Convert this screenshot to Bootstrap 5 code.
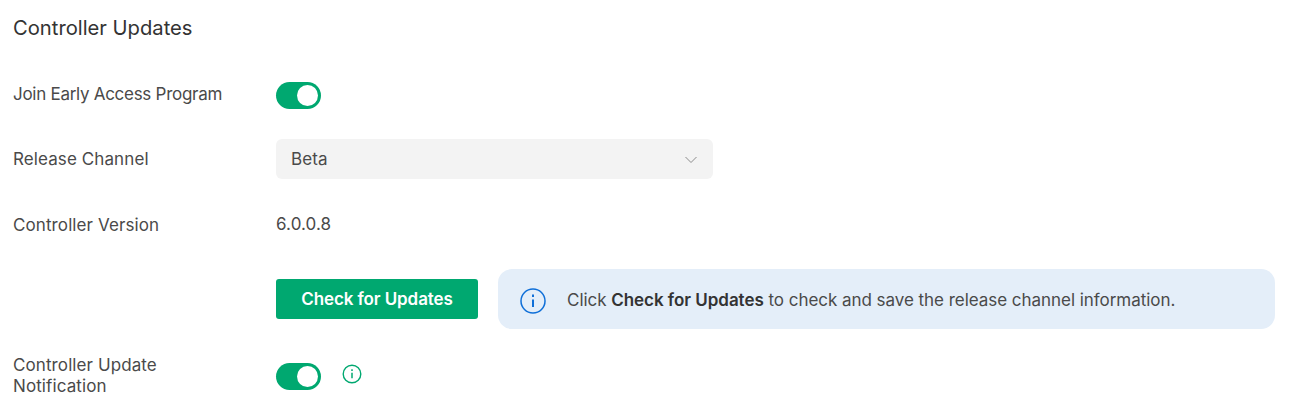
<!DOCTYPE html>
<html lang="en">
  <head>
    <meta charset="utf-8" />
    <meta name="viewport" content="width=device-width, initial-scale=1.0" />
    <title>Controller Updates</title>
    <link
      href="https://cdn.jsdelivr.net/npm/bootstrap@5.3.0/dist/css/bootstrap.min.css"
      rel="stylesheet"
    />
    <style>
      html,
      body {
        height: 100%;
        overflow: hidden;
        background-color: #fff;
        font-family: "Inter", "Noto Sans", sans-serif;
        color: #4a4a4a;
      }
      .settings-page {
        padding: 16px 38px 0 13px;
      }
      .settings-title {
        font-size: 20.2px;
        line-height: 24px;
        font-weight: 400;
        color: #333;
        margin-bottom: 42px;
      }
      .setting-row {
        font-size: 17px;
        letter-spacing: 0.1px;
      }
      .setting-label {
        width: 263px;
        flex-shrink: 0;
        line-height: 21px;
      }
      .label-narrow {
        width: 190px;
        margin-right: 73px;
      }
      .row-join {
        height: 27px;
        margin-bottom: 30px;
      }
      .row-join .setting-label {
        margin-top: -3px;
        letter-spacing: -0.28px;
      }
      .row-channel {
        height: 40px;
        margin-bottom: 30px;
      }
      .row-version {
        height: 32px;
        margin-bottom: 28px;
      }
      .row-check {
        height: 60px;
        margin-bottom: 26px;
      }
      .row-notify {
        height: 42px;
      }
      .toggle-pill {
        width: 45px;
        height: 27px;
        border-radius: 14px;
        background-color: #00a870;
        padding: 3px;
      }
      .toggle-pill span {
        width: 21px;
        height: 21px;
        border-radius: 50%;
        background-color: #fff;
      }
      .channel-select {
        width: 437px;
        height: 40px;
        border-radius: 6px;
        background-color: #f3f3f3;
        padding: 2px 15px 0 15px;
      }
      .check-btn {
        width: 202px;
        height: 40px;
        border-radius: 3px;
        border: 0;
        background-color: #00a870;
        color: #fff;
        font-size: 17px;
        font-weight: 600;
        letter-spacing: -0.1px;
      }
      .check-btn:hover {
        background-color: #00a870;
        color: #fff;
      }
      .check-label {
        position: relative;
        top: 1px;
      }
      .check-note {
        width: 777px;
        height: 60px;
        margin-left: 20px;
        border-radius: 14px;
        background-color: #e4eef9;
        padding: 4px 0 0 22px;
        letter-spacing: -0.04px;
      }
      .check-note svg {
        margin-right: 21px;
      }
      .check-note b {
        font-weight: 600;
        color: #333;
      }
      .notify-icon {
        margin-left: 21px;
      }
    </style>
  </head>
  <body>
    <div class="settings-page">
      <div class="settings-title">Controller Updates</div>

      <div class="setting-row row-join d-flex align-items-center">
        <div class="setting-label">Join Early Access Program</div>
        <div class="toggle-pill d-flex justify-content-end"><span></span></div>
      </div>

      <div class="setting-row row-channel d-flex align-items-center">
        <div class="setting-label">Release Channel</div>
        <div class="channel-select d-flex align-items-center justify-content-between">
          <span>Beta</span>
          <svg width="14" height="8" viewBox="0 0 14 8" fill="none" stroke="#8c8c8c" stroke-width="1">
            <path d="M1.5 1l5.500 5.500L12.500 1" />
          </svg>
        </div>
      </div>

      <div class="setting-row row-version d-flex align-items-center">
        <div class="setting-label">Controller Version</div>
        <div>6.0.0.8</div>
      </div>

      <div class="setting-row row-check d-flex align-items-center">
        <div class="setting-label"></div>
        <button type="button" class="btn check-btn p-0"><span class="check-label">Check for Updates</span></button>
        <div class="check-note d-flex align-items-center">
          <svg width="26" height="26" viewBox="0 0 26 26" fill="none" stroke="#0f6fd8">
            <circle cx="13" cy="13" r="12" stroke-width="1.500" />
            <path d="M13 11.500v7.500" stroke-width="2" />
            <path d="M13 6.500v2.500" stroke-width="2" />
          </svg>
          <span>Click <b>Check for Updates</b> to check and save the release channel information.</span>
        </div>
      </div>

      <div class="setting-row row-notify d-flex align-items-center">
        <div class="setting-label label-narrow">Controller Update Notification</div>
        <div class="toggle-pill d-flex justify-content-end"><span></span></div>
        <svg class="notify-icon mb-1" width="20" height="20" viewBox="0 0 20 20" fill="none" stroke="#00a870">
          <circle cx="10" cy="10" r="8.800" stroke-width="1.400" />
          <path d="M10 8.800v5.500" stroke-width="1.500" />
          <path d="M10 5.200v1.800" stroke-width="1.500" />
        </svg>
      </div>
    </div>
    <script src="https://cdn.jsdelivr.net/npm/bootstrap@5.3.0/dist/js/bootstrap.bundle.min.js"></script>
  </body>
</html>
